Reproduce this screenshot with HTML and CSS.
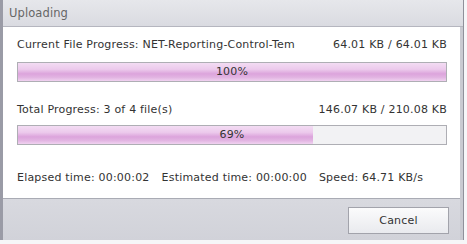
FILE: index.html
```html
<!DOCTYPE html>
<html>
<head>
<meta charset="utf-8">
<link rel="stylesheet" href="styles.css">
</head>
<body>
<div class="window">
  <div class="titlebar">Uploading</div>
  <div class="frame">
    <div class="content">
      <div class="row">
        <span>Current File Progress: NET-Reporting-Control-Tem</span>
        <span>64.01 KB / 64.01 KB</span>
      </div>
      <div class="bar bar1"><div class="fill" style="width:100%"></div><span class="pct">100%</span></div>
      <div class="row row2">
        <span>Total Progress: 3 of 4 file(s)</span>
        <span>146.07 KB / 210.08 KB</span>
      </div>
      <div class="bar bar2"><div class="fill" style="width:69%"></div><span class="pct">69%</span></div>
      <div class="times">
        <span>Elapsed time: 00:00:02</span>
        <span>Estimated time: 00:00:00</span>
        <span>Speed: 64.71 KB/s</span>
      </div>
    </div>
    <div class="footer">
      <button class="btn">Cancel</button>
    </div>
  </div>
</div>
</body>
</html>
```
FILE: styles.css
```css
html, body { margin: 0; padding: 0; }
body {
  background: #f6f6f8;
  width: 467px;
  height: 244px;
  overflow: hidden;
  font-family: "DejaVu Sans", Tahoma, sans-serif;
  font-size: 11px;
  letter-spacing: 0.2px;
  color: #333;
}
.window {
  width: 460px;
  height: 240px;
  border-left: 3px solid #9a9ba6;
  border-right: 1px solid #8f909a;
  background: #c9cad1;
  display: flex;
  flex-direction: column;
}
.titlebar {
  height: 27px;
  box-sizing: border-box;
  padding-left: 6px;
  line-height: 27px;
  font-size: 11.5px;
  letter-spacing: 0.1px;
  color: #666;
  background: linear-gradient(#e6e7eb, #dadbe1);
  border-bottom: 1px solid #b5b6bf;
}
.frame {
  flex: 1;
  display: flex;
  flex-direction: column;
  margin-right: 3px;
}
.content {
  background: #fff;
  height: 172px;
  box-sizing: border-box;
  padding: 9px 13px 0 14px;
  border-bottom: 1px solid #a9abb4;
}
.row {
  display: flex;
  justify-content: space-between;
  height: 18px;
  line-height: 18px;
}
.row2 { margin-top: 19px; }
.bar {
  position: relative;
  height: 20px;
  box-sizing: border-box;
  border: 1px solid #aeaeb4;
  background: #f2f2f4;
}
.bar1 { margin-top: 8px; }
.bar2 { margin-top: 6px; }
.fill {
  height: 100%;
  background: linear-gradient(#f3dcf3 0%, #eccaec 35%, #dca4dc 60%, #e2b4e2 80%, #f0d2f0 100%);
}
.pct {
  position: absolute;
  left: 0; right: 0; top: 0; bottom: 0;
  text-align: center;
  line-height: 18px;
}
.times {
  margin-top: 24px;
  display: flex;
  gap: 12px;
  height: 18px;
  line-height: 18px;
}
.footer {
  flex: 1;
  background: linear-gradient(#d8d9df, #d1d2d9);
  display: flex;
  justify-content: flex-end;
  align-items: flex-start;
  padding: 8px 11px 0 0;
}
.btn {
  width: 101px;
  height: 27px;
  font-family: "DejaVu Sans", Tahoma, sans-serif;
  font-size: 11px;
  letter-spacing: 0.2px;
  color: #333;
  border: 1px solid #a2a3ab;
  background: linear-gradient(#fbfbfc, #e9eaee);
  padding: 0;
}
```
